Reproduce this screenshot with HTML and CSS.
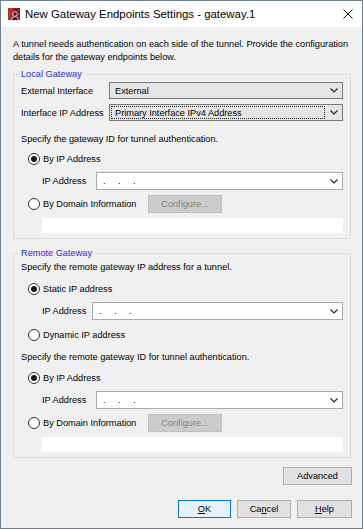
FILE: index.html
```html
<!DOCTYPE html>
<html>
<head>
<meta charset="utf-8">
<link rel="stylesheet" href="styles.css">
</head>
<body>
<div class="window">
  <div class="titlebar">
    <svg class="app-icon" width="12" height="13" viewBox="0 0 12 13">
      <rect x="0" y="0" width="12" height="12" fill="#8e1b1b"/>
      <rect x="0" y="0" width="5" height="12" fill="#b3302c"/>
      <circle cx="7" cy="6" r="2.3" fill="#1d2336" stroke="#fff" stroke-width="0.8"/>
      <path d="M3.5 12.5 Q3.5 8.6 7 8.6 Q10.5 8.6 10.5 12.5 Z" fill="#1d2336" stroke="#fff" stroke-width="0.8"/>
    </svg>
    <span class="title">New Gateway Endpoints Settings - gateway.1</span>
    <svg class="close" width="10" height="10" viewBox="0 0 10 10">
      <path d="M0.5 0.5 L9.5 9.5 M9.5 0.5 L0.5 9.5" stroke="#111" stroke-width="1"/>
    </svg>
  </div>
  <div class="content">
    <p class="desc">A tunnel needs authentication on each side of the tunnel. Provide the configuration details for the gateway endpoints below.</p>

    <fieldset class="group">
      <legend>Local Gateway</legend>
      <div class="field-row">
        <span class="field-label">External Interface</span>
        <div class="combo"><span class="combo-text">External</span><svg class="chev" width="8" height="5" viewBox="0 0 8 5"><path d="M0.5 0.5 L4 4 L7.5 0.5" fill="none" stroke="#222" stroke-width="1.1"/></svg></div>
      </div>
      <div class="field-row gap5">
        <span class="field-label">Interface IP Address</span>
        <div class="combo"><span class="combo-text focus">Primary Interface IPv4 Address</span><svg class="chev" width="8" height="5" viewBox="0 0 8 5"><path d="M0.5 0.5 L4 4 L7.5 0.5" fill="none" stroke="#222" stroke-width="1.1"/></svg></div>
      </div>
      <p class="hint gap12">Specify the gateway ID for tunnel authentication.</p>
      <div class="radio-row gap6"><span class="radio checked"></span><span>By IP Address</span></div>
      <div class="ip-row gap7">
        <span class="ip-label">IP Address</span>
        <div class="ip-input"><span class="ip-dots"><span>.</span><span>.</span><span>.</span></span><svg class="chev" width="8" height="5" viewBox="0 0 8 5"><path d="M0.5 0.5 L4 4 L7.5 0.5" fill="none" stroke="#222" stroke-width="1.1"/></svg></div>
      </div>
      <div class="domain-row gap5">
        <span class="radio"></span><span class="domain-label">By Domain Information</span>
        <button class="btn disabled" type="button">Configure...</button>
      </div>
      <div class="blank gap5"></div>
    </fieldset>

    <fieldset class="group remote">
      <legend>Remote Gateway</legend>
      <p class="hint">Specify the remote gateway IP address for a tunnel.</p>
      <div class="radio-row gap8"><span class="radio checked"></span><span>Static IP address</span></div>
      <div class="ip-row gap7">
        <span class="ip-label narrow">IP Address</span>
        <div class="ip-input"><span class="ip-dots"><span>.</span><span>.</span><span>.</span></span><svg class="chev" width="8" height="5" viewBox="0 0 8 5"><path d="M0.5 0.5 L4 4 L7.5 0.5" fill="none" stroke="#222" stroke-width="1.1"/></svg></div>
      </div>
      <div class="radio-row gap8"><span class="radio"></span><span>Dynamic IP address</span></div>
      <p class="hint gap10">Specify the remote gateway ID for tunnel authentication.</p>
      <div class="radio-row gap7"><span class="radio checked"></span><span>By IP Address</span></div>
      <div class="ip-row gap7">
        <span class="ip-label">IP Address</span>
        <div class="ip-input"><span class="ip-dots"><span>.</span><span>.</span><span>.</span></span><svg class="chev" width="8" height="5" viewBox="0 0 8 5"><path d="M0.5 0.5 L4 4 L7.5 0.5" fill="none" stroke="#222" stroke-width="1.1"/></svg></div>
      </div>
      <div class="domain-row gap5">
        <span class="radio"></span><span class="domain-label">By Domain Information</span>
        <button class="btn disabled" type="button">Configure...</button>
      </div>
      <div class="blank gap5"></div>
    </fieldset>

    <div class="adv-row">
      <button class="btn adv" type="button">Advanced</button>
    </div>
    <div class="actions">
      <button class="btn primary ok" type="button"><u>O</u>K</button>
      <button class="btn cancel" type="button">Ca<u>n</u>cel</button>
      <button class="btn help" type="button"><u>H</u>elp</button>
    </div>
  </div>
</div>
</body>
</html>
```
FILE: styles.css
```css
* { box-sizing: border-box; }
html, body { margin: 0; padding: 0; background: #f0f0f0; }
body {
  font-family: "Liberation Sans", Arial, sans-serif;
  font-size: 9.2px;
  color: #000;
}
.window {
  width: 363px;
  height: 529px;
  border: 1px solid #6e7f8e;
  background: #f0f0f0;
  display: flex;
  flex-direction: column;
}
.titlebar {
  height: 26px;
  flex: none;
  background: #fff;
  display: flex;
  align-items: center;
  padding-left: 7px;
}
.app-icon { flex: none; margin-top: 1px; }
.title {
  margin-left: 5px;
  font-size: 11.4px;
  color: #000;
  white-space: nowrap;
}
.close { margin-left: auto; margin-right: 9px; flex: none; }

.content {
  padding: 11px 10px 0 12px;
  display: flex;
  flex-direction: column;
}
.desc {
  margin: 0 0 4px 0;
  line-height: 13px;
}
.group {
  margin: 0;
  border: 1px solid #dcdcdc;
  padding: 1px 7px 5px 7px;
  min-width: 0;
  margin-right: 1px;
}
.group legend {
  padding: 0 3px;
  margin-left: -3px;
  line-height: 13px;
  color: #2b2bd0;
}
.remote { margin-top: 8px; }

.hint { margin: 0; line-height: 13px; }

.field-row {
  display: flex;
  align-items: center;
  height: 17px;
}
.field-label { width: 88px; flex: none; white-space: nowrap; }
.combo {
  flex: 1;
  height: 17px;
  background: #e5e5e5;
  border: 1px solid #7a7a7a;
  display: flex;
  align-items: center;
  padding: 0 0 0 1px;
}
.combo-text {
  flex: 1;
  height: 13px;
  line-height: 12px;
  padding-left: 3px;
  border: 1px solid transparent;
  white-space: nowrap;
}
.combo-text.focus { border: 1px dotted #222; }
.chev { flex: none; margin: 0 4px 0 5px; }

.radio-row {
  display: flex;
  align-items: center;
  height: 13px;
  padding-left: 7px;
}
.radio {
  width: 12px;
  height: 12px;
  flex: none;
  border: 1px solid #333;
  border-radius: 50%;
  background: #fff;
  margin-right: 3px;
  display: flex;
  align-items: center;
  justify-content: center;
}
.radio.checked::after {
  content: "";
  width: 6px;
  height: 6px;
  border-radius: 50%;
  background: #1a1a1a;
}

.ip-row {
  display: flex;
  align-items: center;
  height: 18px;
  padding-left: 21px;
}
.ip-label { width: 54px; flex: none; }
.ip-label.narrow { width: 50px; }
.ip-input {
  flex: 1;
  height: 18px;
  background: #fff;
  border: 1px solid #a9a9a9;
  display: flex;
  align-items: center;
}
.ip-dots {
  flex: 1;
  display: flex;
  padding-left: 6px;
  line-height: 12px;
}
.ip-dots span { width: 15px; }

.domain-row {
  display: flex;
  align-items: center;
  height: 18px;
  padding-left: 7px;
}
.domain-label { width: 105px; flex: none; white-space: nowrap; }

.btn {
  font-family: "Liberation Sans", Arial, sans-serif;
  font-size: 9.2px;
  height: 18px;
  padding: 0;
  background: #e1e1e1;
  border: 1px solid #adadad;
  color: #000;
  border-radius: 0;
}
.btn.disabled {
  width: 74px;
  background: #cccccc;
  border-color: #bfbfbf;
  color: #838383;
}
.blank {
  height: 15px;
  margin-left: 21px;
  background: #fff;
}

.gap5 { margin-top: 5px; }
.gap6 { margin-top: 6px; }
.gap7 { margin-top: 7px; }
.gap8 { margin-top: 8px; }
.gap10 { margin-top: 10px; }
.gap12 { margin-top: 12px; }

.adv-row {
  display: flex;
  justify-content: flex-end;
  margin-top: 9px;
}
.adv { width: 69px; }
.actions {
  display: flex;
  justify-content: flex-end;
  margin-top: 15px;
}
.ok { width: 53px; }
.cancel { width: 54px; margin-left: 6px; }
.help { width: 55px; margin-left: 6px; }
.primary {
  background: #e5f1fb;
  border-color: #0078d7;
}
.btn u { text-decoration: underline; }
```
